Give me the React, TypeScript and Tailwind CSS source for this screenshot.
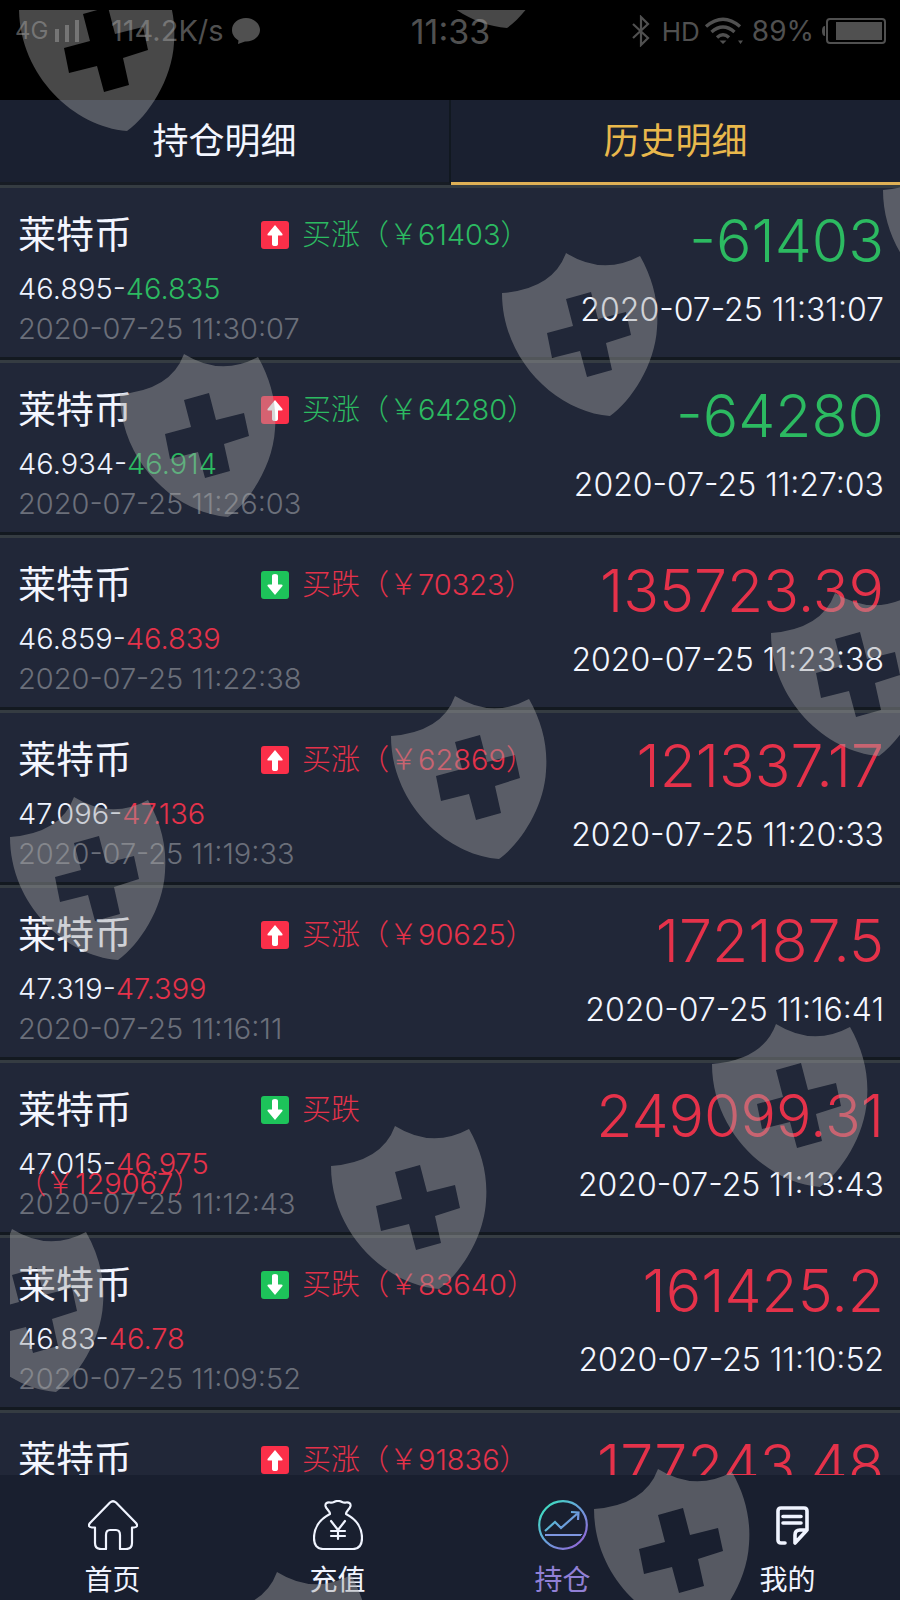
import React from "react";

type Dir = "up" | "down";
type Tone = "gain" | "loss";

interface Trade {
  dir: Dir;
  tone: Tone;
  stake: string;
  open: string;
  close: string;
  openedAt: string;
  profit: string;
  closedAt: string;
  wrapped?: boolean;
}

const trades: Trade[] = [
  { dir: "up", tone: "loss", stake: "61403", open: "46.895", close: "46.835", openedAt: "2020-07-25 11:30:07", profit: "-61403", closedAt: "2020-07-25 11:31:07" },
  { dir: "up", tone: "loss", stake: "64280", open: "46.934", close: "46.914", openedAt: "2020-07-25 11:26:03", profit: "-64280", closedAt: "2020-07-25 11:27:03" },
  { dir: "down", tone: "gain", stake: "70323", open: "46.859", close: "46.839", openedAt: "2020-07-25 11:22:38", profit: "135723.39", closedAt: "2020-07-25 11:23:38" },
  { dir: "up", tone: "gain", stake: "62869", open: "47.096", close: "47.136", openedAt: "2020-07-25 11:19:33", profit: "121337.17", closedAt: "2020-07-25 11:20:33" },
  { dir: "up", tone: "gain", stake: "90625", open: "47.319", close: "47.399", openedAt: "2020-07-25 11:16:11", profit: "172187.5", closedAt: "2020-07-25 11:16:41" },
  { dir: "down", tone: "gain", stake: "129067", open: "47.015", close: "46.975", openedAt: "2020-07-25 11:12:43", profit: "249099.31", closedAt: "2020-07-25 11:13:43", wrapped: true },
  { dir: "down", tone: "gain", stake: "83640", open: "46.83", close: "46.78", openedAt: "2020-07-25 11:09:52", profit: "161425.2", closedAt: "2020-07-25 11:10:52" },
];

const partialTrade = { stake: "91836", profit: "177243.48" };

const shields: [number, number][] = [
  [19, -32], [399, -135], [883, 150], [502, 253], [120, 354], [771, 593], [391, 696],
  [10, 797], [712, 1024], [331, 1126], [-52, 1229], [594, 1469], [213, 1572],
];

function StatusBar() {
  return (
    <header className="h-[100px] shrink-0 bg-black text-[#505050]">
      <div className="grid h-[62px] grid-cols-[1fr_auto_1fr] items-center pl-[15px] pr-[14px] text-[27px]">
        <div className="flex items-center">
          <span className="w-[40px] text-[24px]">4G</span>
          <svg className="h-[22px] w-[26px]" viewBox="0 0 26 22" fill="currentColor" aria-hidden="true">
            <path d="M0 9h4v13H0zM10 5h4v17h-4zM20 0h4v22h-4z" />
          </svg>
          <span className="ml-[30px] text-[29px]">114.2K/s</span>
          <svg className="ml-2 h-[28px] w-[28px]" viewBox="0 0 28 28" fill="currentColor" aria-hidden="true">
            <path d="M14 1C6 1 0 6 0 13c0 5 3 8 6.500 10.500L6 27l7-2.500C22 25 28 19 28 13S22 1 14 1z" />
          </svg>
        </div>
        <span className="text-[34px]">11:33</span>
        <div className="flex items-center justify-end">
          <svg className="h-[32px] w-[18px]" viewBox="0 0 18 32" fill="none" stroke="currentColor" strokeWidth="2.200" aria-hidden="true">
            <path d="M1 9l15 14-7 7V2l7 7L1 23" />
          </svg>
          <span className="ml-3 text-[26px]">HD</span>
          <svg className="ml-1 h-[28px] w-[40px]" viewBox="0 0 40 28" fill="none" stroke="currentColor" strokeWidth="3.400" aria-hidden="true">
            <path d="M2 9.500Q19 -5 36 9.500M7.500 15Q19 5 30.500 15M13 20.500Q19 15 25 20.500" />
            <path d="M15.500 23.500h7L19 27zM34 23.500h5L36.500 27z" fill="currentColor" stroke="none" />
          </svg>
          <span className="ml-2 mr-2 text-[28px]">89%</span>
          <svg className="h-[26px] w-[64px]" viewBox="0 0 64 26" aria-hidden="true">
            <path d="M3 8v10Q0 18 0 13T3 8" fill="currentColor" />
            <rect x="5" y="1" width="58" height="24" rx="3" fill="none" stroke="currentColor" strokeWidth="2" />
            <rect x="14" y="4" width="46" height="18" fill="currentColor" />
          </svg>
        </div>
      </div>
    </header>
  );
}

function DirectionBadge({ dir }: { dir: Dir }) {
  return (
    <svg className="h-[30px] w-[28px] shrink-0" viewBox="0 0 28 30" aria-hidden="true">
      <rect y="1" width="28" height="28" rx="3" fill={dir === "up" ? "#fb2f49" : "#1dc35a"} />
      <path
        transform={dir === "up" ? undefined : "rotate(180 14 15)"}
        d="M14 5l7.500 9q.5 1.500-1 1.500H17V24q0 2-3 2t-3-2v-8.500H7.500q-1.500 0-1-1.500z"
        fill="#fff"
      />
    </svg>
  );
}

const rowBox =
  "relative grid h-[175px] grid-cols-[243px_1fr_auto] border-b-[3px] border-t-[3px] border-b-[#131920] border-t-[#353c42] bg-[#212738] pl-[18px] pr-4";

function Stake({ dir, amount, color }: { dir: Dir; amount: string | null; color: string }) {
  return (
    <div className={`mt-[23px] flex h-[48px] items-center whitespace-nowrap text-[29px] font-light ${color}`}>
      <DirectionBadge dir={dir} />
      <span className="ml-[13px]">
        {dir === "up" ? "买涨" : "买跌"}
        {amount && `（￥${amount}）`}
      </span>
    </div>
  );
}

function TradeRow({ t }: { t: Trade }) {
  const color = t.tone === "gain" ? "text-[#e5324a]" : "text-[#2cba61]";
  return (
    <li className={rowBox}>
      <div className="whitespace-nowrap pt-[22px]">
        <h2 className="text-[38px] leading-[48px] text-[#f3f6ff]">莱特币</h2>
        <p className={`mt-[11px] text-[29px] font-light leading-10 ${color}`}>
          <span className="text-[#eef3ff]">{t.open}-</span>
          {t.close}
        </p>
        <p className="text-[29px] font-light leading-10 text-[#6b6f7a]">{t.openedAt}</p>
      </div>
      <Stake dir={t.dir} amount={t.wrapped ? null : t.stake} color={color} />
      <div className="whitespace-nowrap pt-[21px] text-right">
        <p className={`text-[59px] font-light leading-[64px] ${color}`}>{t.profit}</p>
        <p className="mt-[17px] text-[32px] font-light leading-10 text-[#f3f6ff]">{t.closedAt}</p>
      </div>
      {t.wrapped && (
        <span className={`absolute left-[17px] top-[101px] text-[29px] font-light leading-10 ${color}`}>（￥{t.stake}）</span>
      )}
    </li>
  );
}

function PartialTradeRow() {
  const color = "text-[#e5324a]";
  return (
    <li className={rowBox}>
      <h2 className="pt-[22px] text-[38px] leading-[48px] text-[#f3f6ff]">莱特币</h2>
      <Stake dir="up" amount={partialTrade.stake} color={color} />
      <p className={`pt-[21px] text-[59px] font-light leading-[64px] ${color}`}>{partialTrade.profit}</p>
    </li>
  );
}

const icon = "h-[50px] w-[50px]";

function HomeIcon() {
  return (
    <svg className={icon} viewBox="0 0 50 50" fill="none" stroke="currentColor" strokeWidth="2.200" strokeLinejoin="round" aria-hidden="true">
      <path d="M22 2.500Q25 0 28 2.500L48 23q3 4-2 4.500h-2V43q0 6-6 6h-6V35q0-5-4-5h-6q-4 0-4 5v14h-5q-6 0-6-6V27.500H4Q-1 27 2 23z" />
    </svg>
  );
}

function BagIcon() {
  return (
    <svg className={icon} viewBox="0 0 50 50" fill="none" stroke="currentColor" strokeWidth="2.200" strokeLinejoin="round" strokeLinecap="round" aria-hidden="true">
      <path d="M17 14C17 11 13 9 12.500 6Q12 2 17 2.500q2 .5 4-.5 4-2 8 0 2 1 4 .5 5-.5 4.500 3.500C37 9 33 11 33 14c8 4 16 12 16 24 0 7-3 11-9 11H10c-6 0-9-4-9-11 0-12 8-20 16-24z" />
      <path d="M18 21l7 9 7-9M18 31h14M18 36h14M25 30v9" />
    </svg>
  );
}

function ChartIcon() {
  return (
    <svg className={icon} viewBox="0 0 50 50" fill="none" strokeWidth="2.200" aria-hidden="true">
      <defs>
        <linearGradient id="ring" x1="5" y1="5" x2="45" y2="45" gradientUnits="userSpaceOnUse">
          <stop offset="0" stopColor="#3ce0bd" />
          <stop offset=".45" stopColor="#66a6dc" />
          <stop offset="1" stopColor="#9365d8" />
        </linearGradient>
      </defs>
      <g stroke="url(#ring)">
        <circle cx="25" cy="25" r="23.800" />
        <path d="M7 31l10-9 6 6 17-15M33 12l7.500.5L40 20" />
        <path d="M7 35h36v.1" stroke="#7e96e0" />
      </g>
    </svg>
  );
}

function NoteIcon() {
  return (
    <svg className={icon} viewBox="0 0 50 50" fill="none" stroke="currentColor" strokeWidth="3.600" strokeLinejoin="round" strokeLinecap="round" aria-hidden="true">
      <path d="M22 43h-4q-3 0-3-3V11q0-3 3-3h23q3 0 3 3v19L32 43v-8q0-5 5-5h7M20 16.500h18M20 23h18" />
    </svg>
  );
}

const tabs = [
  { label: "首页", Icon: HomeIcon, active: false },
  { label: "充值", Icon: BagIcon, active: false },
  { label: "持仓", Icon: ChartIcon, active: true },
  { label: "我的", Icon: NoteIcon, active: false },
];

function ShieldLayer() {
  return (
    <div className="pointer-events-none absolute inset-0 overflow-hidden pl-[10px] pt-[10px]" aria-hidden="true">
      <svg className="h-full w-full" fill="#a4a4a4" fillOpacity=".44" fillRule="evenodd">
        <defs>
          <path
            id="shield"
            d="M64 0Q101 23 138 3C151 26 157 50 155 75C153 112 129 148 108 163C55 159 0 107 0 40Q51 36 64 0zM64 46L71 73L45 80L50 105L78 98L85 124L110 117L104 90L129 82L124 59L96 66L89 39z"
          />
        </defs>
        {shields.map(([x, y]) => (
          <use key={`${x}:${y}`} href="#shield" x={x - 10} y={y - 10} />
        ))}
      </svg>
    </div>
  );
}

export default function App() {
  return (
    <div className="relative flex h-screen flex-col overflow-hidden bg-[#212738] font-['Inter','Noto_Sans_CJK_SC',sans-serif] [font-feature-settings:'case']">
      <StatusBar />
      <div className="flex h-[85px] shrink-0 bg-[#1a2030] text-[36px]">
        <button type="button" className="flex-1 border-b-[3px] border-r-2 border-b-[#171c24] border-r-[#111820] text-[#f3f6ff]">
          持仓明细
        </button>
        <button type="button" className="flex-1 border-b-[3px] border-[#dfb055] text-[#e9b84c]">
          历史明细
        </button>
      </div>
      <main className="min-h-0 flex-1 overflow-hidden">
        <ul>
          {trades.map((t) => (
            <TradeRow key={t.closedAt} t={t} />
          ))}
          <PartialTradeRow />
        </ul>
      </main>
      <nav className="grid h-[125px] shrink-0 grid-cols-4 bg-[#191f2f] pt-[25px]">
        {tabs.map(({ label, Icon, active }) => (
          <a key={label} href="#" className={`flex flex-col items-center gap-[10px] text-[28px] leading-10 ${active ? "text-[#9180d6]" : "text-[#f0f4ff]"}`}>
            <Icon />
            {label}
          </a>
        ))}
      </nav>
      <ShieldLayer />
    </div>
  );
}
